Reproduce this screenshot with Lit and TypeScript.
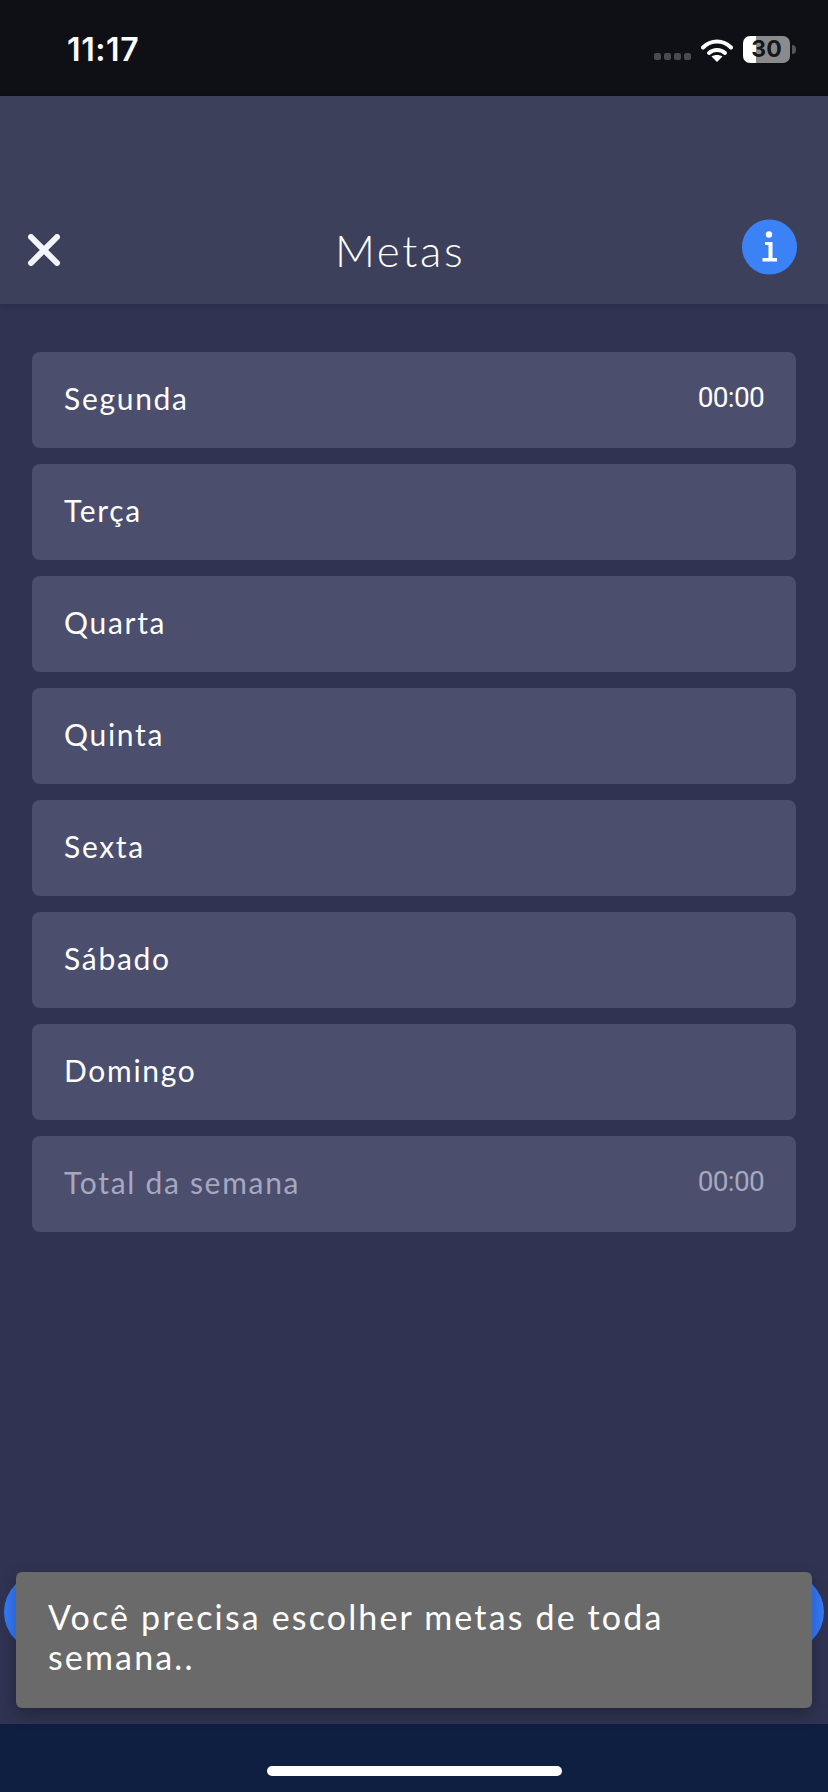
import { LitElement, html, css } from "lit";
import { customElement } from "lit/decorators.js";

const DAYS = ["Segunda", "Terça", "Quarta", "Quinta", "Sexta", "Sábado", "Domingo"];

@customElement("app-root")
export class AppRoot extends LitElement {
  static styles = css`
    :host { display: block; width: 828px; height: 1792px; font-family: "Lato", "Noto Sans", sans-serif; color: #fff; }
    .page { position: relative; display: flex; flex-direction: column; height: 1792px; background: #303352; overflow: hidden; }
    .status { height: 96px; flex: none; background: #0e1016; display: flex; align-items: flex-start; box-sizing: border-box; padding: 31px 32px 0 67px; }
    .time { font-family: "Inter", sans-serif; font-weight: 600; font-size: 32px; line-height: 38px; letter-spacing: 0.6px; }
    .status-right { margin-left: auto; display: flex; align-items: flex-start; position: relative; top: 5px; }
    .dots { display: flex; gap: 3px; margin-top: 17px; margin-right: 10px; }
    .dots i { width: 7px; height: 7px; border-radius: 2px; background: #4a4b50; display: block; }
    .wifi { margin-top: 2px; margin-right: 10px; display: block; }
    .battery { width: 47px; height: 27px; border-radius: 7px; background: linear-gradient(90deg, #fff 0 13px, #8b8b8d 13px); color: #15161b; font-family: "Inter", sans-serif; font-weight: 700; font-size: 23px; line-height: 27px; text-align: center; }
    .tip { width: 4px; height: 9px; margin: 9px 0 0 2px; background: #55565a; border-radius: 0 4px 4px 0; }
    .header { height: 208px; flex: none; background: #3d405b; box-shadow: 0 2px 6px rgba(0,0,0,.12); position: relative; z-index: 1; display: grid; grid-template-columns: 307px auto 1fr; align-items: end; box-sizing: border-box; padding: 0 31px 29px 28px; }
    .close { display: block; margin-bottom: 9px; }
    .title { font-size: 44px; line-height: 50px; font-weight: 300; letter-spacing: 2.6px; }
    .info { justify-self: end; display: block; }
    .main { flex: 1; display: flex; flex-direction: column; min-height: 0; }
    .list { display: flex; flex-direction: column; gap: 16px; padding: 48px 32px 0; }
    .row { height: 96px; border-radius: 8px; background: #4b4e6d; display: flex; align-items: center; justify-content: space-between; padding: 0 32px 4px; box-sizing: border-box; }
    .label { font-size: 30px; letter-spacing: 1.7px; line-height: 34px; }
    .val { font-family: "Roboto", sans-serif; font-size: 28px; font-weight: 400; line-height: 34px; letter-spacing: -0.7px; }
    .muted { color: #a6a8c0; }
    .footer { margin-top: auto; padding: 0 4px 73px; }
    .btn { height: 78px; border-radius: 39px; background: #3478f6; }
    .nav { height: 68px; flex: none; background: #0e1f42; display: flex; justify-content: center; padding-top: 42px; box-sizing: border-box; }
    .bar { width: 295px; height: 10px; border-radius: 5px; background: #fff; }
    .toast { position: absolute; left: 16px; right: 16px; top: 1572px; height: 136px; box-sizing: border-box; padding: 25px 32px; background: #6a6a6a; border-radius: 6px; box-shadow: 0 6px 16px rgba(0,0,0,.28); font-size: 34px; line-height: 40px; letter-spacing: 2.15px; font-weight: 400; z-index: 2; }
  `;

  render() {
    return html`
      <div class="page">
        <div class="status">
          <div class="time">11:17</div>
          <div class="status-right">
            <div class="dots"><i></i><i></i><i></i><i></i></div>
            <svg class="wifi" width="32" height="24" viewBox="0 0 32 24">
              <path d="M2 9.500C10 1.500 22 1.500 30 9.500" fill="none" stroke="#fff" stroke-width="4" stroke-linecap="round"/>
              <path d="M8 15C12.500 11 19.500 11 24 15" fill="none" stroke="#fff" stroke-width="4" stroke-linecap="round"/>
              <path d="M16 24L10.500 18.500C13.500 16.500 18.500 16.500 21.500 18.500Z" fill="#fff"/>
            </svg>
            <div class="battery">30</div>
            <div class="tip"></div>
          </div>
        </div>
        <div class="header">
          <svg class="close" width="32" height="32" viewBox="0 0 32 32">
            <path d="M3 3L29 29M29 3L3 29" stroke="#f3f5fb" stroke-width="6" stroke-linecap="round"/>
          </svg>
          <div class="title">Metas</div>
          <svg class="info" width="55" height="56" viewBox="0 0 55 56">
            <circle cx="27.500" cy="28" r="27.500" fill="#3b82f6"/>
            <circle cx="27" cy="15.500" r="3.200" fill="#fff"/>
            <path d="M23 23H30.500V39H35V42.500H20.500V39H26.500V26H23Z" fill="#fff"/>
          </svg>
        </div>
        <div class="main">
          <div class="list">
            ${DAYS.map(
              (d, i) => html`<div class="row"><span class="label">${d}</span>${i === 0 ? html`<span class="val">00:00</span>` : ""}</div>`
            )}
            <div class="row muted"><span class="label">Total da semana</span><span class="val">00:00</span></div>
          </div>
          <div class="footer"><div class="btn"></div></div>
        </div>
        <div class="nav"><div class="bar"></div></div>
        <div class="toast">Você precisa escolher metas de toda semana..</div>
      </div>
    `;
  }
}
